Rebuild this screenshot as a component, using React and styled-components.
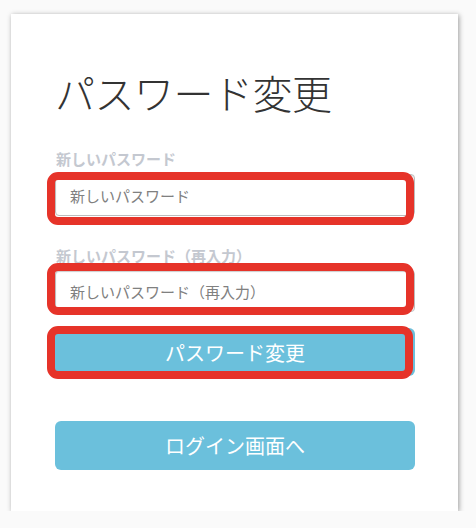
import React from "react";
import styled, { createGlobalStyle } from "styled-components";

const Global = createGlobalStyle`
  html, body { margin: 0; padding: 0; background: #fafafa; }
  body { font-family: "Noto Sans CJK JP", "Noto Sans", sans-serif; }
  * { box-sizing: border-box; }
`;

const Page = styled.div`
  padding: 14px 0 0 11px;
`;

const Card = styled.div`
  width: 447px;
  height: 497px;
  background: #fff;
  box-shadow: 1px 1px 5px rgba(0, 0, 0, 0.38);
  padding: 54px 43px 0 44px;
  display: flex;
  flex-direction: column;
`;

const Title = styled.h1`
  margin: 0 0 33px 0;
  font-size: 40px;
  line-height: 48px;
  font-weight: 300;
  color: #333;
  letter-spacing: -0.5px;
`;

const Label = styled.label`
  display: block;
  font-size: 15px;
  line-height: 20px;
  font-weight: 700;
  color: #c4c8d0;
  margin: 0 0 ${(p) => p.$gap}px 1px;
`;

const Mark = styled.div`
  position: relative;
  margin-bottom: ${(p) => p.$mb || 0}px;
  &::after {
    content: "";
    position: absolute;
    top: ${(p) => p.$t}px;
    left: ${(p) => p.$l}px;
    right: ${(p) => p.$r}px;
    bottom: ${(p) => p.$b}px;
    border: 8px solid #e63329;
    border-radius: 11px;
    pointer-events: none;
  }
`;

const Input = styled.input`
  display: block;
  width: 100%;
  height: 42px;
  border: 1px solid #bdbdbd;
  border-radius: 4px;
  box-shadow: inset 0 1px 1px rgba(0, 0, 0, 0.2);
  padding: 0 14px;
  font-family: "Noto Sans CJK JP", sans-serif;
  font-size: 15px;
  color: #555;
  background: #fff;
  outline: none;
  &::placeholder { color: #808080; }
`;

const Button = styled.button`
  display: block;
  width: 100%;
  height: ${(p) => p.$h}px;
  border: none;
  border-radius: 6px;
  background: #6bc0dc;
  color: #fff;
  font-family: "Noto Sans CJK JP", sans-serif;
  font-size: 20px;
  font-weight: 400;
  cursor: pointer;
  margin-top: ${(p) => p.$mt || 0}px;
`;

export default function App() {
  return (
    <>
      <Global />
      <Page>
        <Card>
          <Title>パスワード変更</Title>
          <Label $gap={5}>新しいパスワード</Label>
          <Mark $t={-2} $l={-8} $r={1} $b={-9} $mb={30}>
            <Input type="password" placeholder="新しいパスワード" />
          </Mark>
          <Label $gap={4}>新しいパスワード（再入力）</Label>
          <Mark $t={-7} $l={-8} $r={1} $b={-3} $mb={16}>
            <Input type="password" placeholder="新しいパスワード（再入力）" />
          </Mark>
          <Mark $t={-2} $l={-8} $r={2} $b={-3}>
            <Button $h={48}>パスワード変更</Button>
          </Mark>
          <Button $h={49} $mt={45}>ログイン画面へ</Button>
        </Card>
      </Page>
    </>
  );
}
